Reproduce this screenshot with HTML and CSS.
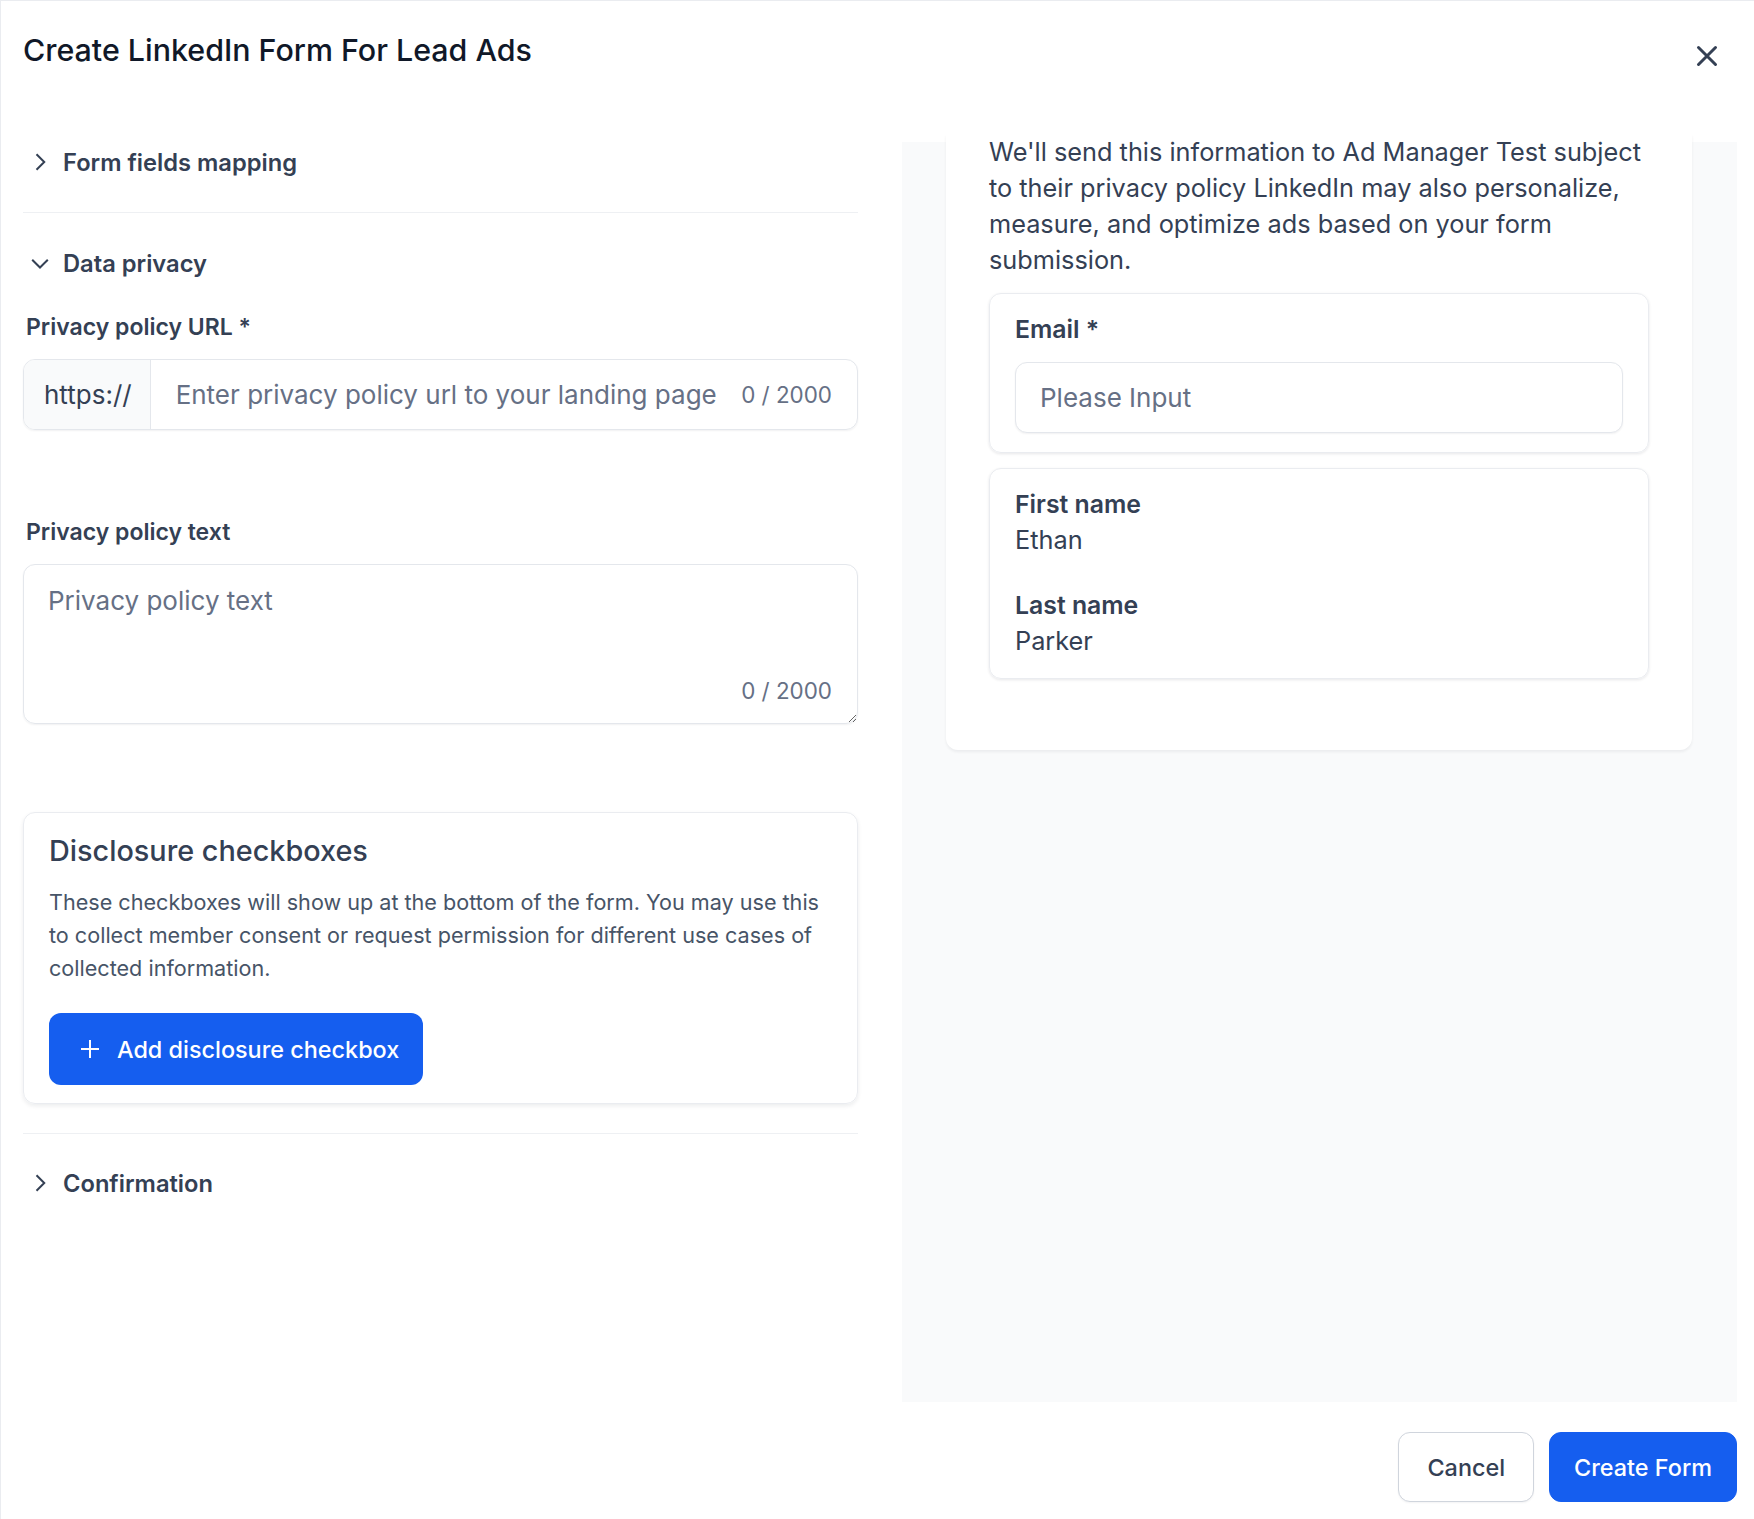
FILE: index.html
```html
<!DOCTYPE html>
<html lang="en">
<head>
<meta charset="utf-8">
<title>Create LinkedIn Form For Lead Ads</title>
<link rel="stylesheet" href="styles.css">
</head>
<body>
<div class="modal">
  <header class="modal-header">
    <h1 class="modal-title">Create LinkedIn Form For Lead Ads</h1>
    <button class="close-btn" aria-label="Close">
      <svg width="22" height="22" viewBox="0 0 22 22"><path d="M2.5 2.5L19.5 19.5M19.5 2.5L2.5 19.5" stroke="#344054" stroke-width="3" stroke-linecap="round" fill="none"/></svg>
    </button>
  </header>

  <main class="modal-body">
    <div class="form-col">
      <section class="section">
        <div class="section-header">
          <svg class="chev" width="24" height="24" viewBox="0 0 48 48"><path d="M17 39.5 32.5 24 17 8.5" fill="none" stroke="#344054" stroke-width="4"/></svg>
          <span>Form fields mapping</span>
        </div>
      </section>

      <section class="section">
        <div class="section-header">
          <svg class="chev" width="24" height="24" viewBox="0 0 48 48"><path d="M39.6 17.4 24 33 8.4 17.4" fill="none" stroke="#344054" stroke-width="4"/></svg>
          <span>Data privacy</span>
        </div>

        <label class="field-label">Privacy policy URL *</label>
        <div class="url-input">
          <span class="addon">https://</span>
          <input type="text" placeholder="Enter privacy policy url to your landing page">
          <span class="counter">0 / 2000</span>
        </div>

        <label class="field-label gap-lg">Privacy policy text</label>
        <div class="textarea-box">
          <textarea placeholder="Privacy policy text"></textarea>
          <span class="counter">0 / 2000</span>
        </div>

        <div class="disclosure-card">
          <h2 class="disclosure-title">Disclosure checkboxes</h2>
          <p class="disclosure-desc">These checkboxes will show up at the bottom of the form. You may use this to collect member consent or request permission for different use cases of collected information.</p>
          <button class="btn-add">
            <svg width="20" height="20" viewBox="0 0 20 20"><path d="M10 1v18M1 10h18" stroke="#fff" stroke-width="2" fill="none"/></svg>
            <span>Add disclosure checkbox</span>
          </button>
        </div>
      </section>

      <section class="section">
        <div class="section-header">
          <svg class="chev" width="24" height="24" viewBox="0 0 48 48"><path d="M17 39.5 32.5 24 17 8.5" fill="none" stroke="#344054" stroke-width="4"/></svg>
          <span>Confirmation</span>
        </div>
      </section>
    </div>

    <aside class="preview">
      <div class="preview-card">
        <p class="preview-text">We'll send this information to Ad Manager Test subject to their privacy policy LinkedIn may also personalize, measure, and optimize ads based on your form submission.</p>
        <div class="field-card">
          <div class="pv-label">Email *</div>
          <input class="pv-input" type="text" placeholder="Please Input">
        </div>
        <div class="field-card">
          <div class="pv-label">First name</div>
          <div class="pv-value">Ethan</div>
          <div class="pv-label spaced">Last name</div>
          <div class="pv-value">Parker</div>
        </div>
      </div>
    </aside>
  </main>

  <footer class="modal-footer">
    <button class="btn btn-cancel">Cancel</button>
    <button class="btn btn-primary">Create Form</button>
  </footer>
</div>
</body>
</html>
```

FILE: styles.css
```css
* {
  box-sizing: border-box;
  margin: 0;
  padding: 0;
}

html, body {
  width: 1754px;
  height: 1519px;
  overflow: hidden;
}

body {
  font-family: Inter, "Noto Sans", sans-serif;
  background: #ffffff;
  color: #344054;
}

button, input, textarea {
  font-family: inherit;
}

.modal {
  height: 1519px;
  border-top: 1px solid #eaecf0;
  border-left: 1px solid #eaecf0;
  display: flex;
  flex-direction: column;
}

/* Header */
.modal-header {
  height: 141px;
  flex: none;
  padding: 31px 36px 0 22px;
  display: flex;
  justify-content: space-between;
  align-items: flex-start;
}

.modal-title {
  font-size: 30.4px;
  line-height: 36px;
  font-weight: 500;
  color: #101828;
}

.close-btn {
  width: 22px;
  height: 22px;
  margin-top: 13px;
  border: none;
  background: none;
  display: flex;
}

/* Body */
.modal-body {
  height: 1260px;
  flex: none;
  display: grid;
  grid-template-columns: 835px 835px;
  column-gap: 44px;
  padding-left: 22px;
}

.form-col {
  display: flex;
  flex-direction: column;
}

.section {
  padding: 30px 0 29px;
  border-bottom: 1px solid #eef0f3;
}

.section:first-child {
  padding-top: 0;
  padding-bottom: 30px;
}

.section:last-child {
  border-bottom: none;
  padding-top: 29px;
}

.section-header {
  height: 40px;
  display: flex;
  align-items: center;
  gap: 11px;
  padding-left: 5px;
  font-size: 23.7px;
  font-weight: 600;
  color: #344054;
}

.chev {
  flex: none;
}

.field-label {
  display: block;
  margin-top: 29px;
  padding-left: 3px;
  font-size: 23px;
  line-height: 30px;
  font-weight: 600;
  color: #344054;
}

.field-label.gap-lg {
  margin-top: 87px;
}

.url-input {
  margin-top: 17px;
  height: 71px;
  display: flex;
  align-items: center;
  border: 1px solid #e4e7ec;
  border-radius: 12px;
  box-shadow: 0 1px 2px rgba(16, 24, 40, 0.06);
  overflow: hidden;
}

.addon {
  align-self: stretch;
  display: flex;
  align-items: center;
  padding: 0 18px 0 20px;
  background: #f9fafb;
  border-right: 1px solid #e4e7ec;
  font-size: 26px;
  color: #344054;
}

.url-input input {
  flex: 1;
  min-width: 0;
  height: 100%;
  border: none;
  outline: none;
  background: transparent;
  padding-left: 25px;
  font-size: 26px;
  color: #344054;
}

.url-input input::placeholder,
.textarea-box textarea::placeholder,
.pv-input::placeholder {
  color: #667085;
}

.counter {
  font-size: 22.4px;
  line-height: 30px;
  color: #667085;
  white-space: nowrap;
}

.url-input .counter {
  padding: 0 25px 0 16px;
}

.textarea-box {
  margin-top: 17px;
  height: 160px;
  display: flex;
  flex-direction: column;
  border: 1px solid #e4e7ec;
  border-radius: 12px;
  box-shadow: 0 1px 2px rgba(16, 24, 40, 0.06);
  padding: 19px 25px 17px 24px;
  resize: vertical;
  overflow: hidden;
}

.textarea-box textarea {
  flex: 1;
  border: none;
  outline: none;
  resize: none;
  font-size: 26px;
  line-height: 34px;
  color: #344054;
  background: transparent;
}

.textarea-box .counter {
  align-self: flex-end;
}

.disclosure-card {
  margin-top: 88px;
  border: 1px solid #eaecf0;
  border-radius: 12px;
  box-shadow: 0 2px 4px rgba(16, 24, 40, 0.08);
  padding: 24px 24px 18px 25px;
}

.disclosure-title {
  font-size: 28.8px;
  line-height: 28px;
  font-weight: 500;
  color: #344054;
}

.disclosure-desc {
  margin-top: 21px;
  font-size: 21.6px;
  line-height: 33px;
  color: #475467;
}

.btn-add {
  margin-top: 28px;
  height: 72px;
  display: inline-flex;
  align-items: center;
  gap: 17px;
  padding: 0 24px 0 31px;
  border: none;
  border-radius: 12px;
  background: #155eef;
  color: #ffffff;
  font-size: 23.4px;
  font-weight: 500;
}

/* Preview */
.preview {
  background: #f9fafb;
  padding: 0 45px 0 44px;
}

.preview-card {
  background: #ffffff;
  border-radius: 0 0 12px 12px;
  box-shadow: 0 2px 3px rgba(16, 24, 40, 0.06);
  padding: 0 43px 71px;
}

.preview-text {
  margin-top: -8px;
  font-size: 25.3px;
  line-height: 36px;
  color: #344054;
}

.field-card {
  margin-top: 15px;
  border: 1px solid #eaecf0;
  border-radius: 12px;
  box-shadow: 0 1px 3px rgba(16, 24, 40, 0.1);
  padding: 20px 25px 19px;
}

.pv-label {
  font-size: 24.8px;
  line-height: 30px;
  font-weight: 600;
  color: #344054;
}

.pv-label.spaced {
  margin-top: 32px;
}

.pv-value {
  margin-top: 3px;
  font-size: 25.3px;
  line-height: 36px;
  color: #344054;
}

.pv-input {
  display: block;
  width: 100%;
  margin-top: 18px;
  height: 71px;
  border: 1px solid #e4e7ec;
  border-radius: 12px;
  box-shadow: 0 1px 2px rgba(16, 24, 40, 0.06);
  padding: 0 24px;
  font-size: 26px;
  color: #344054;
  outline: none;
}

/* Footer */
.modal-footer {
  flex: 1;
  display: flex;
  justify-content: flex-end;
  align-items: flex-start;
  gap: 15px;
  padding: 30px 17px 0 0;
}

.btn {
  height: 70px;
  border-radius: 12px;
  font-size: 23.4px;
  font-weight: 500;
}

.btn-cancel {
  padding: 0 28px;
  background: #ffffff;
  border: 1px solid #d0d5dd;
  color: #344054;
  box-shadow: 0 1px 2px rgba(16, 24, 40, 0.05);
}

.btn-primary {
  padding: 0 24px;
  background: #155eef;
  border: 1px solid #155eef;
  color: #ffffff;
}
```
